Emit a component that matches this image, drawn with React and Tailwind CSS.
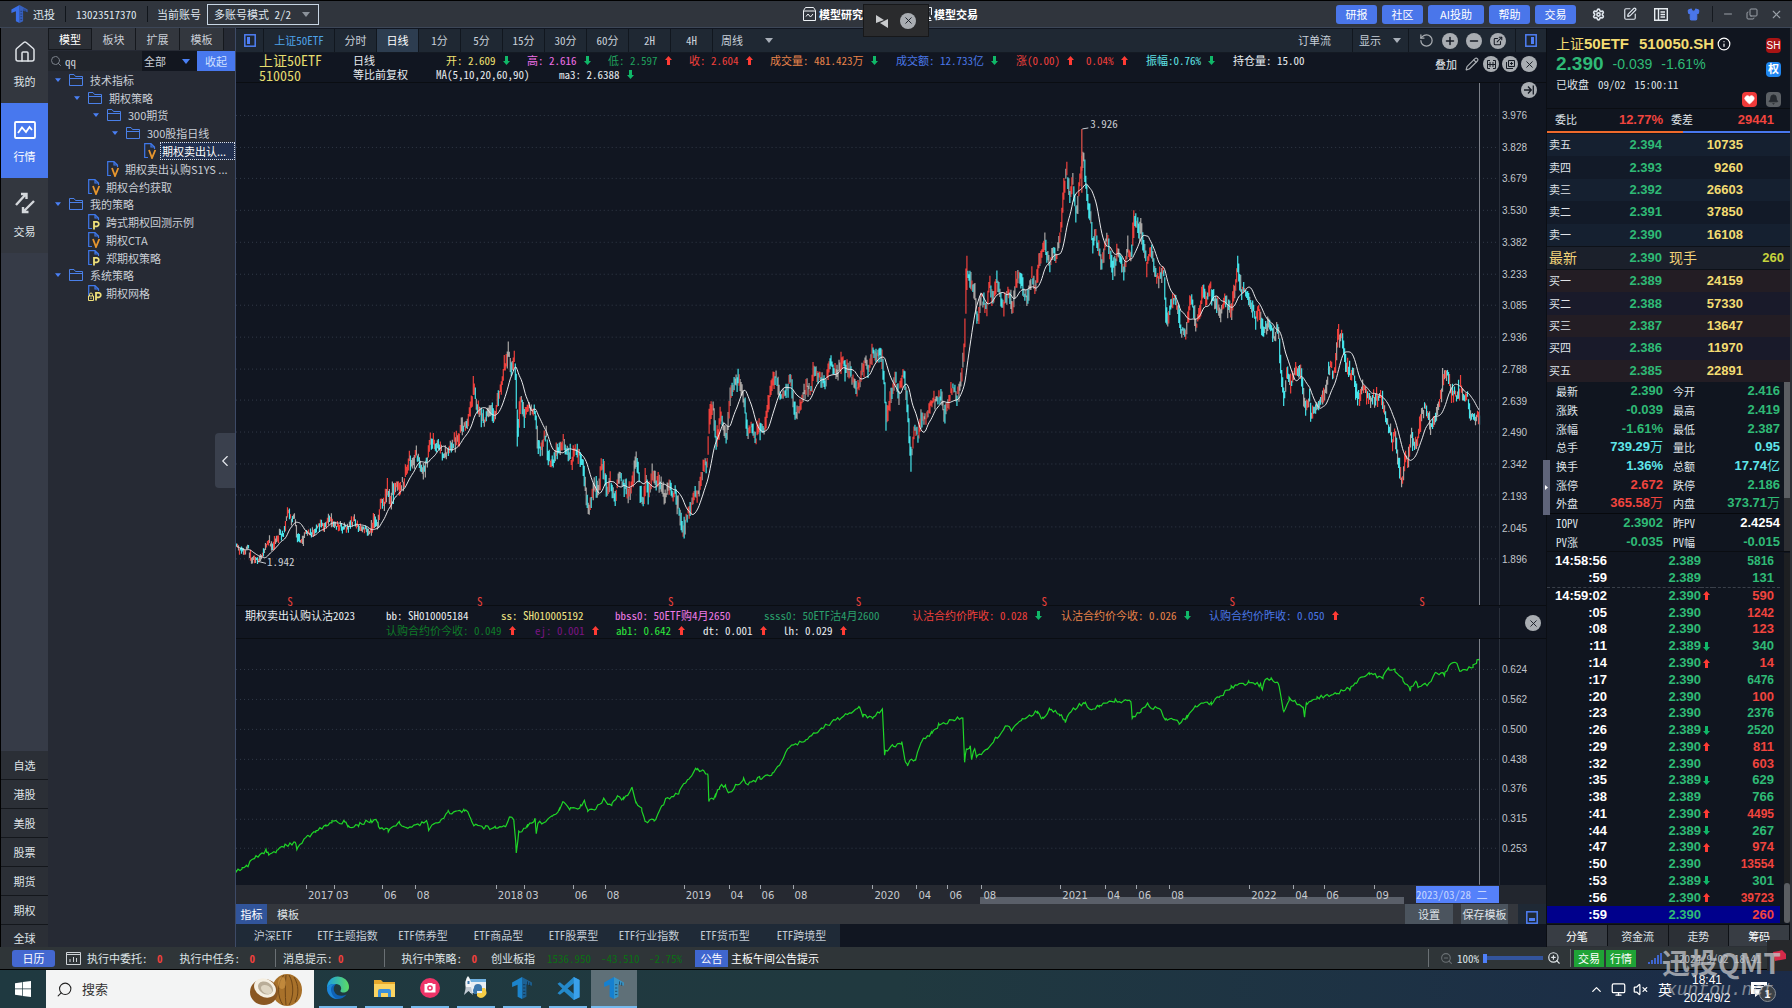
import React from "react";
import {
  Search, House, Settings, SquarePen, Shirt, Minus, Copy, X, RotateCcw, Plus, ExternalLink,
  Pencil, Info, Heart, Bell, ZoomIn, ZoomOut, ChevronUp, ChevronLeft, Monitor, VolumeX,
} from "lucide-react";

const UI = "[font-family:'Noto_Sans_CJK_SC',sans-serif]";
const MONO = "[font-family:'Noto_Sans_Mono_CJK_SC','Liberation_Mono','Noto_Sans_CJK_SC',monospace]";
const NUM = "[font-family:'Liberation_Sans','Noto_Sans_CJK_SC',sans-serif]";

/* ---------- chart data ---------- */

const CHART_LEFT = 236;
const CHART_RIGHT = 1481;
const CHART_W = 1264;
const PRICE_H = 523;
const SUB_H = 246;

function trace(ox, oy, sx, sy, text) {
  return text.trim().split(/\s+/).map((p) => {
    const [x, y] = p.split(",").map(Number);
    return [ox + x / sx, oy + y / sy];
  });
}

const pricePath = [
  ...trace(230, 330, 2.376, 3, `14,650 30,670 42,655 50,690 66,695 80,670 92,635 100,655 118,610 125,620 137,540 145,575 152,560
  160,625 170,635 180,610 195,615 210,585 222,590 237,565 250,590 265,595 280,590 293,572 308,600 320,600 331,612 342,580 350,590
  357,515 365,530 373,485 380,515 390,470 400,475 412,455 425,385 435,400 442,370 455,430 467,395 475,325 490,350 505,370 515,370
  525,345 540,330 550,290 560,295 570,245 579,170 585,230 598,265 610,265 620,240 626,265 640,190 652,110 662,65 668,125 676,75
  683,320 690,200 698,260 710,230 724,245 732,350 740,355 750,315 757,390 770,395 778,355 790,335 800,360 810,395 818,360 828,370
  838,410 845,480 851,550 860,500 866,460 874,490 882,410 890,430 895,500 903,450 913,510 925,440 938,470 947,505 957,450 964,385
  972,450 975,510 983,520 987,420 993,500 1003,435 1015,465 1025,470 1035,505 1043,460 1052,495 1058,475 1068,550 1074,585
  1079,595 1087,555 1095,535 1103,495 1112,490 1120,440 1126,400 1133,400 1139,270 1148,230 1155,340 1166,260 1172,290 1179,325
  1190,190 1198,170 1207,140 1216,190 1222,230 1230,310 1238,290 1248,335 1258,290 1266,310 1275,260 1285,170 1297,140 1308,200
  1320,185 1333,150 1342,260 1350,240 1360,205 1370,170 1380,190 1387,115 1400,140 1413,170 1425,95 1435,130 1445,130 1453,90
  1463,125 1475,130 1488,180 1498,150 1508,95 1516,120 1527,65 1535,80 1543,60 1550,90 1553,120`),
  ...trace(880, 100, 2.529, 3, `12,850 15,950 24,910 38,830 48,880 59,810 68,900 75,1020 79,1080 87,990 96,1010 104,950 115,960
  130,910 142,890 155,900 165,945 175,900 183,865 195,890 207,830 212,770 215,700 219,500 228,540 240,590 247,670 256,590 269,630
  278,550 286,600 295,540 310,620 325,570 335,630 343,550 352,530 362,570 373,600 385,530 392,565 402,500 415,430 422,470 430,500
  437,450 447,475 457,400 465,280 472,215 480,290 488,240 496,340 505,260 512,170 516,180 524,290 532,340 539,440 547,400 560,490
  575,410 590,510 603,450 618,520 628,450 637,480 642,350 652,380 664,400 674,490 686,450 700,540 718,510 725,670 730,640 745,590
  755,640 761,690 775,700 785,600 790,600 800,680 812,620 818,570 828,600 837,560 848,610 860,640 872,600 888,640 897,580 905,510
  915,570 928,575 943,620 952,660 958,620 971,700 985,670 998,710 1008,690 1016,830 1023,900 1030,820 1040,860 1052,810 1064,820
  1073,890 1078,940 1087,900 1091,950 1105,920 1115,920 1127,870 1140,800 1150,820 1160,700 1168,700 1178,780 1190,830 1200,820
  1209,900 1225,860 1240,890 1255,900 1266,880 1280,950 1290,990 1297,1030 1303,1000 1313,1100 1322,1150 1330,1070 1337,1080
  1345,1000 1352,1040 1360,1030 1370,940 1380,920 1390,950 1394,980 1408,960 1418,890 1427,830 1437,820 1446,870 1460,890
  1470,860 1478,890 1486,880 1495,950 1506,960 1518,950`),
];

const equityPath = [
  ...trace(230, 460, 2.45, 3, `14,1235 30,1225 40,1222 60,1195 90,1172 95,1183 115,1172 135,1157 160,1148 164,1165 190,1132
  210,1118 235,1098 250,1087 282,1087 290,1103 315,1095 345,1082 362,1083 364,1105 372,1103 388,1112 415,1090 428,1106 450,1100
  482,1085 487,1107 515,1085 535,1058 575,1052 590,1070 596,1098 625,1103 650,1105 675,1098 685,1075 696,1080 702,1175 708,1120
  730,1098 748,1078 751,1125 755,1092 790,1072 808,1050 816,1028 835,1048 860,1040 869,1022 877,1050 893,1050 915,1020 937,1035
  950,1008 965,1018 986,988 995,1030 1010,1050 1018,1085 1040,1082 1055,1050 1068,1020 1100,998 1125,955 1145,925 1158,935
  1172,945 1174,1022 1190,1010 1200,982 1215,975 1222,1000 1258,958 1270,970 1300,955 1330,940 1358,895 1370,862 1410,842
  1450,805 1490,778 1530,752 1542,745`),
  ...trace(860, 590, 2.272, 3, `0,355 8,378 30,380 52,358 57,490 75,468 96,460 103,505 109,530 115,512 127,512 140,455 165,430
  180,405 215,390 235,382 239,512 243,480 252,470 255,505 262,475 266,500 290,475 310,445 333,408 345,420 370,388 405,365 417,388
  433,358 455,372 467,395 480,365 512,335 525,358 545,350 580,332 617,335 620,385 640,365 655,345 685,362 697,388 715,385 727,402
  745,380 765,345 800,340 820,320 845,290 885,278 912,285 916,300 920,275 935,266 952,280 965,368 977,328 990,335 1008,350
  1012,378 1016,345 1040,325 1085,310 1115,295 1130,275 1160,252 1190,262 1203,237 1217,238 1235,270 1252,298 1265,272 1270,295
  1295,280 1310,250 1330,252 1340,230 1358,215 1365,243 1395,230 1403,215 1410,213`),
];

function sampler(points) {
  let i = 0;
  return (x) => {
    while (i < points.length - 2 && points[i + 1][0] < x) i++;
    const [x0, y0] = points[i];
    const [x1, y1] = points[i + 1];
    const t = Math.max(0, Math.min(1, (x - x0) / (x1 - x0 || 1)));
    return y0 + (y1 - y0) * t;
  };
}

function random(seed) {
  let s = seed;
  return () => {
    s = (s * 1664525 + 1013904223) % 4294967296;
    return s / 4294967296;
  };
}

function buildCandles() {
  const rnd = random(11);
  const at = sampler(pricePath);
  const d = { up: "", down: "", flat: "" };
  const mids = [];
  let prev = pricePath[0][1];
  for (let x = CHART_LEFT; x < CHART_RIGHT; x++) {
    const base = at(x);
    const calm = x < 370 ? 0.6 : 1;
    const mid = base + (rnd() - 0.5) * 7 * calm;
    const slope = base - prev;
    const hi = mid - (1.5 + rnd() * rnd() * 11 + Math.abs(slope) * 0.4) * calm;
    const lo = mid + (1.5 + rnd() * rnd() * 11 + Math.abs(slope) * 0.4) * calm;
    const r = rnd() + slope * 0.05;
    const kind = r > 0.68 ? "down" : r < 0.34 ? "up" : "flat";
    const seg = `M${x - CHART_LEFT + 0.5} ${(hi - 83).toFixed(1)}V${(lo - 83).toFixed(1)}`;
    d[kind] += seg;
    mids.push(base);
    prev = base;
  }
  let ma = "";
  mids.forEach((_, k) => {
    const from = Math.max(0, k - 15);
    let sum = 0;
    for (let j = from; j <= k; j++) sum += mids[j];
    ma += `${k ? "L" : "M"}${k + 0.5} ${(sum / (k - from + 1) - 83).toFixed(1)}`;
  });
  return { ...d, ma };
}

function buildEquity() {
  const rnd = random(5);
  const at = sampler(equityPath);
  let d = "";
  const keep = equityPath.map((p) => p[0]);
  const xs = [];
  for (let x = CHART_LEFT; x < CHART_RIGHT; x += 2) xs.push(x);
  [...xs, ...keep].sort((a, b) => a - b).forEach((x, k) => {
    const y = at(x) + (rnd() - 0.5) * 4;
    d += `${k ? "L" : "M"}${(x - CHART_LEFT).toFixed(1)} ${(y - 639).toFixed(1)}`;
  });
  return d;
}

const candles = buildCandles();
const equity = buildEquity();

const priceTicks = ["3.976", "3.828", "3.679", "3.530", "3.382", "3.233", "3.085", "2.936", "2.788", "2.639", "2.490", "2.342", "2.193", "2.045", "1.896"];
const subTicks = ["0.624", "0.562", "0.500", "0.438", "0.376", "0.315", "0.253"];
const sellMarks = [290, 480, 671, 859, 1045, 1233, 1423];
const timeTicks = [
  [306, "2017"], [334, "03"], [382, "06"], [415, "08"], [496, "2018"], [524, "03"], [573, "06"], [605, "08"], [684, "2019"],
  [729, "04"], [760, "06"], [793, "08"], [873, "2020"], [917, "04"], [948, "06"], [982, "08"], [1061, "2021"], [1106, "04"],
  [1137, "06"], [1170, "08"], [1250, "2022"], [1294, "04"], [1325, "06"], [1375, "09"],
];
const pct = (x) => `${((x - CHART_LEFT) / CHART_W) * 100}%`;

/* ---------- small drawings ---------- */

function Arrow({ dir }) {
  return (
    <svg width="7" height="9" viewBox="0 0 7 9" className={dir === "up" ? "shrink-0 text-[#ff3b34]" : "shrink-0 rotate-180 text-[#10b768]"}>
      <path d="M3.500 0L7 4H5V9H2V4H0Z" fill="currentColor" />
    </svg>
  );
}

function Caret({ className }) {
  return (
    <svg width="8" height="5" viewBox="0 0 8 5" className={className}>
      <path d="M0 0H8L4 5Z" fill="currentColor" />
    </svg>
  );
}

function BrandMark({ className, a, b }) {
  return (
    <svg viewBox="0 0 18 20" className={className}>
      <path d="M9 0L0 5V9L5 7V18L9 20Z" fill={a} />
      <path d="M9 0L18 5V8L13 6.500V18L9 20Z" fill={b} fillOpacity=".75" />
      <path d="M10 7H12M10 10H12M10 13H12M10 16H12M14 4V7M16 5V8" stroke="#10151f" strokeOpacity=".6" strokeWidth=".8" />
    </svg>
  );
}

function Folder() {
  return (
    <svg width="14" height="12" viewBox="0 0 14 12" fill="none" stroke="#4a80e8" className="shrink-0">
      <path d="M.5 11.500V.5H5L6.500 2.500H13.500V11.500ZM.5 4.500H13.500" />
    </svg>
  );
}

function Script({ kind }) {
  return (
    <svg width="14" height="16" viewBox="0 0 14 16" fill="none" className="shrink-0">
      <path d="M4 14.500H.7V.7H7L10.500 4V6M7 .7V4H10.500" stroke="#3f78ea" strokeWidth="1.200" />
      {kind === "V" && <path d="M5 7L8 15L11.300 7" stroke="#e8962e" strokeWidth="1.800" />}
      {kind === "P" && <path d="M6 15.500V7.800H9A2.300 2.300 0 0 1 9 12.300H6" stroke="#efe07a" strokeWidth="1.800" />}
      {kind === "L" && <path d="M8 15.500V7.800H11A2.300 2.300 0 0 1 11 12.300H8" stroke="#efe07a" strokeWidth="1.800" />}
      {kind === "L" && <path d="M.5 11H5.500V15.500H.5ZM1.500 11V9.500A1.500 1.500 0 0 1 4.500 9.500V11M3 12.500V14" fill="#262a34" stroke="#efe07a" />}
    </svg>
  );
}

function PanelGlyph({ side }) {
  return (
    <svg width="12" height="13" viewBox="0 0 12 13" fill="none" stroke="#4f7ff5" strokeWidth="1.500">
      <rect x=".8" y=".8" width="10.400" height="11.400" />
      {side === "left" && <rect x="3" y="3" width="3" height="7" fill="#4f7ff5" stroke="none" />}
      {side === "right" && <rect x="6" y="3" width="3" height="7" fill="#4f7ff5" stroke="none" />}
      {side === "bottom" && <rect x="3" y="7" width="6" height="3" fill="#4f7ff5" stroke="none" />}
    </svg>
  );
}

function RoundButton({ label, children }) {
  return (
    <button aria-label={label} className="flex size-4 items-center justify-center rounded-full bg-[#a9adb2] text-[#161b24]">
      {children}
    </button>
  );
}

const Divider = ({ className = "bg-[#10151b]" }) => <span className={`h-4 w-px ${className}`} />;

/* ---------- title bar ---------- */

function TitleBar() {
  return (
    <header className="relative flex h-7 shrink-0 items-center border-t border-b border-t-black border-b-[#3c4657] bg-[#30353d] text-[11px] text-[#dfe6ee]">
      <BrandMark className="ml-[11px] h-[18px] w-[17px]" a="#3a6fe8" b="#3a6fe8" />
      <span className="ml-[5px] w-8">迅投</span>
      <Divider />
      <span className={`w-[81px] pl-[10px] ${MONO}`}>13023517370</span>
      <Divider />
      <label htmlFor="account" className="pr-1.5 pl-[9px]">当前账号</label>
      <div className="relative">
        <select id="account" className={`h-[21px] w-28 appearance-none border border-[#c8d6e4] bg-transparent pl-1.5 text-[11px] leading-4 ${MONO}`}>
          <option>多账号模式 2/2</option>
        </select>
        <Caret className="pointer-events-none absolute top-2 right-[9px] text-[#8b929b]" />
      </div>

      <div className="absolute left-[803px] flex items-center font-bold text-white">
        <svg width="13" height="14" viewBox="0 0 13 14" fill="none" stroke="#eef2f6"><path d="M.5 3.500L2.500 .5H10.500L12.500 3.500V13.500H.5ZM.5 4H12.500M3 9.500L5 7L7.500 10L10 7" /></svg>
        <a href="#research" className="w-[103px] pl-[3px] whitespace-nowrap">模型研究</a>
        <svg width="13" height="14" viewBox="0 0 13 14" fill="none" stroke="#eef2f6"><path d="M.5 .5H12.500V8M.5 .5V13.500H12.500M9 9L12 11.500H8M3 7L5 4.500L7.500 7.500L10 4.500" /></svg>
        <a href="#trade" className="pl-0.5 whitespace-nowrap">模型交易</a>
      </div>
      <div className="absolute top-[3px] left-[863px] z-20 flex h-[33px] w-[66px] items-center justify-center gap-3 border border-[#17181a] bg-[#2a2b2d]">
        <svg width="12" height="14" viewBox="0 0 12 14" fill="#c9cbcd"><path d="M0 1L8 6L0 9ZM12 5V14L4 9Z" /></svg>
        <RoundButton label="关闭浮窗"><X size={11} strokeWidth={2} /></RoundButton>
      </div>

      <nav className="ml-auto flex items-center gap-[5px] text-white">
        <button className="h-[19px] w-[41px] rounded-[3px] bg-[#4a76ea]">研报</button>
        <button className="h-[19px] w-[41px] rounded-[3px] bg-[#4a76ea]">社区</button>
        <button className="h-[19px] w-14 rounded-[3px] bg-[#4a76ea]">AI投助</button>
        <button className="h-[19px] w-[41px] rounded-[3px] bg-[#4a76ea]">帮助</button>
        <button className="h-[19px] w-[41px] rounded-[3px] bg-[#4a76ea]">交易</button>
      </nav>
      <div className="flex items-center pr-[9px] pl-4">
        <button aria-label="设置" className="w-[31px]"><Settings size={13} strokeWidth={3} /></button>
        <button aria-label="编辑" className="w-[31px]"><SquarePen size={14} /></button>
        <button aria-label="布局" className="w-[33px]">
          <svg width="14" height="13" viewBox="0 0 14 13" fill="none" stroke="#e6ebf0" strokeWidth="1.400"><path d="M.7 .7H13.300V12.300H.7ZM4.500 .7V12.300M6.500 4H11M6.500 6.500H11M6.500 9H11" /></svg>
        </button>
        <button aria-label="皮肤" className="w-[25px]"><Shirt size={13} fill="#4a76ea" color="#4a76ea" /></button>
        <Divider className="bg-[#15191f]" />
        <button aria-label="最小化" className="ml-[9px] w-6"><Minus size={12} color="#9aa0a8" /></button>
        <button aria-label="还原" className="w-6"><Copy size={12} color="#9aa0a8" className="-scale-y-100" /></button>
        <button aria-label="关闭"><X size={13} color="#9aa0a8" /></button>
      </div>
    </header>
  );
}

/* ---------- left side ---------- */

function NavRail() {
  const markets = ["自选", "港股", "美股", "股票", "期货", "期权", "全球"];
  return (
    <nav className="flex w-12 shrink-0 flex-col border-l border-black bg-[#363b47] text-[11px] text-[#dfe3e8]">
      <button className="flex h-[75px] flex-col items-center justify-end gap-[9px] bg-[#33373f] pb-3.5">
        <House size={24} strokeWidth={1.500} />
        <span className="leading-4">我的</span>
      </button>
      <button className="flex h-[75px] flex-col items-center justify-end gap-[9px] bg-[#4878ee] pb-3.5 text-white">
        <svg width="22" height="18" viewBox="0 0 22 18" fill="none" stroke="white" strokeWidth="1.800"><rect x="1" y="1" width="20" height="16" rx="1" /><path d="M4 12L8 6.500L12 11L15.500 6L18 9" /></svg>
        <span className="leading-4">行情</span>
      </button>
      <button className="flex h-[75px] flex-col items-center justify-end gap-[9px] bg-[#33373f] pb-3.5">
        <svg width="20" height="22" viewBox="0 0 20 22" fill="none" stroke="#d4d7db" strokeWidth="2.400"><path d="M1 13L11 2M6 2H11.500V7M19 9L8 20M13.500 20H8V15" /></svg>
        <span className="leading-4">交易</span>
      </button>
      <div className="mt-auto flex flex-col bg-[#2b2f36]">
        {markets.map((m) => (
          <button key={m} className="h-[29px] border-b border-[#14171c] last:h-[22px] last:border-b-0 last:pt-1">{m}</button>
        ))}
      </div>
    </nav>
  );
}

const tree = [
  [0, "dir", "技术指标"], [1, "dir", "期权策略"], [2, "dir", "300期货"], [3, "dir", "300股指日线"], [4, "V", "期权卖出认...", true],
  [2, "V", "期权卖出认购S1YS ..."], [1, "V", "期权合约获取"], [0, "dir", "我的策略"], [1, "P", "跨式期权回测示例"], [1, "V", "期权CTA"],
  [1, "P", "郑期权策略"], [0, "dir", "系统策略"], [1, "L", "期权网格"],
];
const indents = ["pl-[7px]", "pl-[26px]", "pl-[45px]", "pl-16", "pl-[82px]"];

function ModelPanel() {
  return (
    <aside className="relative flex w-[188px] shrink-0 flex-col border-r border-[#3d4a66] bg-[#262a34] text-[11px] text-[#c9ced6]">
      <div className="flex h-[22px] shrink-0">
        {["模型", "板块", "扩展", "模板"].map((t, i) => (
          <button key={t} className={i === 0 ? "w-11 border border-[#15181d] bg-[#2b2f36] text-white" : "w-11 border-r border-[#15181d] bg-[#33373e]"}>{t}</button>
        ))}
      </div>
      <div className="mt-px flex h-5 shrink-0 items-stretch">
        <label className="flex w-[94px] items-center bg-[#21252c]">
          <Search size={12} className="mx-0.5 text-[#7b818a]" />
          <input aria-label="搜索模型" defaultValue="qq" className={`w-16 bg-transparent pl-px outline-none ${MONO}`} />
        </label>
        <div className="relative">
          <select aria-label="范围" className="h-5 w-[55px] appearance-none bg-[#12161f] pl-0.5"><option>全部</option></select>
          <Caret className="pointer-events-none absolute top-2 right-[7px] text-[#4a80f5]" />
        </div>
        <button className="flex-1 bg-[#4878ee] text-[#cfe0ff]">收起</button>
      </div>
      <ul className="flex h-[231px] shrink-0 flex-col">
        {tree.map(([level, kind, name, on]) => (
          <li key={name} className={`flex flex-1 items-center ${indents[level]}`}>
            {kind === "dir" ? (
              <button className="flex items-center leading-4 whitespace-nowrap">
                <Caret className="mr-2 h-1 w-1.5 text-[#4a80f5]" /><Folder /><span className="pl-[7px]">{name}</span>
              </button>
            ) : (
              <button className="flex flex-1 items-center leading-4 whitespace-nowrap">
                <span className="w-3.5" /><Script kind={kind} />
                <span className={on ? "ml-0.5 flex-1 border border-dotted border-[#d7dce4] bg-[#223050] px-px text-left text-white" : "pl-1"}>{name}</span>
              </button>
            )}
          </li>
        ))}
      </ul>
      <button aria-label="收起侧栏" className="absolute top-[405px] right-0 flex h-[55px] w-5 items-center justify-center rounded-l-sm bg-[#3a404d]">
        <ChevronLeft size={18} strokeWidth={1.500} color="#e6e9ee" />
      </button>
    </aside>
  );
}

/* ---------- centre ---------- */

function ChartToolbar() {
  const cell = "h-full w-[42px] border-r border-[#11171f]";
  return (
    <div className="mt-px flex h-6 shrink-0 items-center border-b border-[#141a23] bg-[#1f2833] text-[11px] text-[#c9d1da]">
      <button aria-label="左侧栏" className="flex h-full w-7 items-center justify-center border-r border-[#11171f]"><PanelGlyph side="left" /></button>
      <button className={`h-full w-[71px] border-r border-[#11171f] text-[#4ea3e8] ${MONO}`}>上证50ETF</button>
      <button className={cell}>分时</button>
      <button className="h-full w-[42px] border-r border-[#11171f] bg-[#2d3d50] text-white">日线</button>
      {["1分", "5分", "15分", "30分", "60分", "2H", "4H"].map((t) => <button key={t} className={`${cell} ${MONO}`}>{t}</button>)}
      <button className="flex h-full items-center pl-2">周线<Caret className="ml-[22px] text-[#a8afb8]" /></button>
      <button className="ml-auto h-full w-[76px] border-r border-[#11171f]">订单流</button>
      <button className="flex h-full w-14 items-center border-r border-[#11171f] pl-1.5">显示<Caret className="ml-3 text-[#a8afb8]" /></button>
      <div className="flex h-full w-[107px] items-center justify-center gap-2 border-r border-[#11171f]">
        <button aria-label="撤销"><RotateCcw size={15} color="#a9adb2" /></button>
        <RoundButton label="放大"><Plus size={12} strokeWidth={3} /></RoundButton>
        <RoundButton label="缩小"><Minus size={12} strokeWidth={3} /></RoundButton>
        <RoundButton label="弹出"><ExternalLink size={10} strokeWidth={2.500} /></RoundButton>
      </div>
      <button aria-label="右侧栏" className="flex w-[30px] justify-center"><PanelGlyph side="right" /></button>
    </div>
  );
}

const quotes = [
  ["开: 2.609", "down", "w-[81px] text-[#f0e070]"], ["高: 2.616", "down", "w-[81px] text-[#ee6fe6]"], ["低: 2.597", "up", "w-[81px] text-[#1f9f5c]"],
  ["收: 2.604", "up", "w-[81px] text-[#f0403c]"], ["成交量: 481.423万", "down", "w-[126px] text-[#e8834a]"], ["成交额: 12.733亿", "down", "w-[120px] text-[#4a78e8]"],
  ["涨(0.00)", "up", "w-[70px] text-[#f0403c]"], ["0.04%", "up", "w-[60px] text-[#f0403c]"], ["振幅:0.76%", "down", "w-[87px] text-[#5fe3e6]"], ["持仓量: 15.00", null, "w-20 text-[#e8ecf0]"],
];

function Value({ item }) {
  const [text, dir, style] = item;
  return <span className={`flex shrink-0 items-center gap-[7px] whitespace-nowrap ${style}`}>{text}{dir && <Arrow dir={dir} />}</span>;
}

function PriceHeader() {
  return (
    <div className={`flex h-[30px] shrink-0 border-b border-[#0a0d12] text-[11px] leading-[14px] text-[#e8ecf0] ${MONO}`}>
      <div className="w-[94px] pl-[23px] text-[14px] text-[#e5dc6e]">
        <div className="-mt-px leading-4">上证50ETF</div>
        <div className="leading-[14px]">510050</div>
      </div>
      <div className="w-[83px] pl-[23px] whitespace-nowrap"><div>日线</div><div>等比前复权</div></div>
      <div className="flex-1">
        <div className="flex pl-[33px]">{quotes.map((q) => <Value key={q[0]} item={q} />)}</div>
        <div className="flex pl-[23px]">
          <span className="w-[123px]">MA(5,10,20,60,90)</span>
          <Value item={["ma3: 2.6388", "down", ""]} />
        </div>
      </div>
      <div className="flex w-[111px] items-center gap-[3px] self-start pt-[3px]">
        <span className="w-[26px]">叠加</span>
        <button aria-label="画线" className="flex size-4 items-center justify-center"><Pencil size={14} color="#a9adb2" /></button>
        <RoundButton label="对比"><svg width="9" height="9" viewBox="0 0 9 9" fill="none" stroke="currentColor"><path d="M3 .5H.5V8.500H3M6 .5H8.500V8.500H6M.5 4.500H8.500M3 2V7M6 2V7" /></svg></RoundButton>
        <RoundButton label="新增"><svg width="9" height="9" viewBox="0 0 9 9" fill="none" stroke="currentColor"><path d="M2.500 .5H8.500V6.500H2.500ZM.5 2V8.500H7M5.500 2V5M4 3.500H7" /></svg></RoundButton>
        <RoundButton label="关闭"><X size={11} strokeWidth={2} /></RoundButton>
      </div>
    </div>
  );
}

function PriceChart() {
  return (
    <div className="flex min-h-0 flex-[523] border-b border-[#0a0d12]">
      <div className={`relative flex-1 text-[11px] leading-3 ${MONO}`}>
        <svg className="absolute inset-0 h-full w-full" viewBox={`0 0 ${CHART_W} ${PRICE_H}`} preserveAspectRatio="none" fill="none">
          {priceTicks.map((t, i) => (
            <path key={t} d={`M0 ${Math.round(32 + i * 31.7) + 0.5}H${CHART_W}`} stroke="#323a48" strokeDasharray="1 3" />
          ))}
          <g strokeWidth="1.200">
            <path d={candles.flat} stroke="#a9a6a4" />
            <path d={candles.up} stroke="#f0403c" />
            <path d={candles.down} stroke="#45e4ea" />
            <path d="M846.500 46V110" stroke="#e8544c" />
          </g>
          <path d={candles.ma} stroke="#e9eaec" strokeWidth="1" />
          <path d="M847 46L853 45M22 479L30 481" stroke="#c9ccd2" />
          <path d="M1244.500 0V523" stroke="#7c818a" />
        </svg>
        <span className="absolute top-[34px] text-[#c9ccd2]" style={{ left: pct(1091) }}>3.926</span>
        <span className="absolute top-[472px] text-[#c9ccd2]" style={{ left: pct(267) }}>1.942</span>
        {sellMarks.map((x) => (
          <span key={x} className="absolute -bottom-0.5 -translate-x-1/2 text-[#e8403a]" style={{ left: pct(x) }}>S</span>
        ))}
      </div>
      <div className={`relative flex w-[47px] flex-col justify-between border-l border-[#2a303b] pt-[27px] pb-10 pl-0.5 text-[10px] leading-[11px] text-[#c2c6cc] ${NUM}`}>
        {priceTicks.map((t) => <span key={t}>{t}</span>)}
        <div className="absolute -top-px right-[9px]">
          <RoundButton label="最新"><svg width="10" height="10" viewBox="0 0 10 10" fill="none" stroke="currentColor" strokeWidth="1.300"><path d="M0 5H7M4 1.500L7.300 5L4 8.500M9.300 .5V9.500" /></svg></RoundButton>
        </div>
      </div>
    </div>
  );
}

const subTop = [
  ["bb: SH010005184", null, "w-[115px] text-[#e8ecf0]"], ["ss: SH010005192", null, "w-[114px] text-[#f0e484]"], ["bbss0: 50ETF购4月2650", null, "w-[149px] text-[#ee7ae6]"],
  ["ssss0: 50ETF沽4月2600", null, "w-[148px] text-[#2aa06c]"], ["认沽合约价昨收: 0.028", "down", "w-[149px] text-[#f0403c]"],
  ["认沽合约价今收: 0.026", "down", "w-[148px] text-[#e8834a]"], ["认购合约价昨收: 0.050", "up", "w-[148px] text-[#4a78e8]"],
];
const subBottom = [
  ["认购合约价今收: 0.049", "up", "w-[149px] text-[#0f7a28]"], ["ej: 0.001", "up", "w-[81px] text-[#7a1482]"], ["ab1: 0.642", "up", "w-[87px] text-[#2ee83c]"],
  ["dt: 0.001", "up", "w-20 text-[#e8ecf0]"], ["lh: 0.029", "up", "w-20 text-[#e8ecf0]"],
];

function SubChart() {
  return (
    <>
      <div className={`flex h-[33px] shrink-0 border-b border-[#0a0d12] pt-0.5 text-[11px] leading-[15px] ${MONO}`}>
        <span className="w-[150px] pl-[9px] whitespace-nowrap text-[#e8ecf0]">期权卖出认购认沽2023</span>
        <div className="flex-1">
          <div className="flex">{subTop.map((q) => <Value key={q[0]} item={q} />)}</div>
          <div className="flex">{subBottom.map((q) => <Value key={q[0]} item={q} />)}</div>
        </div>
        <div className="flex w-[47px] items-center justify-center border-l border-[#2a303b] pl-5"><RoundButton label="关闭副图"><X size={11} strokeWidth={2} /></RoundButton></div>
      </div>
      <div className="flex min-h-0 flex-[246]">
        <div className="relative flex-1">
          <svg className="absolute inset-0 h-full w-full" viewBox={`0 0 ${CHART_W} ${SUB_H}`} preserveAspectRatio="none" fill="none">
            {subTicks.map((t, i) => (
              <path key={t} d={`M0 ${Math.round(30 + i * 29.9) + 0.5}H${CHART_W}`} stroke="#323a48" strokeDasharray="1 3" />
            ))}
            <path d={equity} stroke="#1fd528" strokeWidth="1.200" />
            <path d="M1244.500 0V246" stroke="#7c818a" />
          </svg>
        </div>
        <div className={`flex w-[47px] flex-col justify-between border-l border-[#2a303b] pt-[25px] pb-[31px] pl-0.5 text-[10px] leading-[11px] text-[#c2c6cc] ${NUM}`}>
          {subTicks.map((t) => <span key={t}>{t}</span>)}
        </div>
      </div>
    </>
  );
}

function TimeAxis() {
  return (
    <div className="flex h-[19px] shrink-0 bg-[#262931]">
      <div className="relative flex-1 text-[10px] leading-[12px] text-[#c6cad0] [font-family:'DejaVu_Sans',sans-serif]">
        <span className="absolute bottom-0 h-[7px] bg-[#5a5f69]" style={{ left: pct(981), width: `${(424 / CHART_W) * 100}%` }} />
        {timeTicks.map(([x, t]) => (
          <span key={x} className="absolute top-0 h-1 border-l border-[#a0a5ad]" style={{ left: pct(x) }}>
            <span className="absolute top-[5px] left-px">{t}</span>
          </span>
        ))}
        <span className={`absolute top-px right-0 h-[17px] w-[83px] bg-[#5581fa] text-[11px] leading-4 whitespace-nowrap text-[#c5d6ff] ${MONO}`}>2023/03/28 二</span>
      </div>
      <div className="w-[47px] bg-[#22262e]" />
    </div>
  );
}

function BottomTabs() {
  const etfs = [
    ["沪深ETF", "w-[74px]"], ["ETF主题指数", "w-[75px]"], ["ETF债券型", "w-[76px]"], ["ETF商品型", "w-[75px]"],
    ["ETF股票型", "w-[75px]"], ["ETF行业指数", "w-[76px]"], ["ETF货币型", "w-[76px]"], ["ETF跨境型", "w-[77px]"],
  ];
  return (
    <>
      <div className="flex h-5 shrink-0 items-stretch bg-[#34373d] text-[11px] leading-4 text-[#dfe3e8]">
        <button className="w-[31px] bg-[#31549a] text-white">指标</button>
        <button className="w-[42px]">模板</button>
        <button className="ml-auto w-12 bg-[#4b545e]">设置</button>
        <button className="ml-2 w-[47px] bg-[#4b545e] whitespace-nowrap">保存模板</button>
        <button aria-label="底部栏" className="ml-2.5 flex w-7 items-end justify-center bg-[#1f2935]"><PanelGlyph side="bottom" /></button>
      </div>
      <div className={`flex h-[23px] shrink-0 text-[11px] text-[#c4ccd6] ${MONO}`}>
        {etfs.map(([t, w]) => <button key={t} className={`${w} bg-[#1f2a37] whitespace-nowrap`}>{t}</button>)}
      </div>
    </>
  );
}

/* ---------- right side ---------- */

const G = "text-[#2fba76]";
const R = "text-[#f0443e]";
const C = "text-[#5fe6ea]";
const W = "text-white";

const sells = [["卖五", "2.394", "10735"], ["卖四", "2.393", "9260"], ["卖三", "2.392", "26603"], ["卖二", "2.391", "37850"], ["卖一", "2.390", "16108"]];
const buys = [["买一", "2.389", "24159"], ["买二", "2.388", "57330"], ["买三", "2.387", "13647"], ["买四", "2.386", "11970"], ["买五", "2.385", "22891"]];
const details = [
  ["最新", "2.390", G, "今开", "2.416", G], ["涨跌", "-0.039", G, "最高", "2.419", G], ["涨幅", "-1.61%", G, "最低", "2.387", G],
  ["总手", "739.29万", C, "量比", "0.95", C], ["换手", "1.36%", C, "总额", "17.74亿", C], ["涨停", "2.672", R, "跌停", "2.186", G],
  ["外盘", "365.58万", R, "内盘", "373.71万", G], ["IOPV", "2.3902", G, "昨PV", "2.4254", W], ["PV涨", "-0.035", G, "PV幅", "-0.015", G],
];
const ticks = [
  ["14:58:56", "2.389", "", "5816", G], [":59", "2.389", "", "131", G], ["14:59:02", "2.390", "up", "590", R], [":05", "2.390", "", "1242", R],
  [":08", "2.390", "", "123", R], [":11", "2.389", "down", "340", G], [":14", "2.390", "up", "14", R], [":17", "2.390", "", "6476", G],
  [":20", "2.390", "", "100", R], [":23", "2.390", "", "2376", G], [":26", "2.389", "down", "2520", G], [":29", "2.390", "up", "811", R],
  [":32", "2.390", "", "603", R], [":35", "2.389", "down", "629", G], [":38", "2.389", "", "766", G], [":41", "2.390", "up", "4495", R],
  [":44", "2.389", "down", "267", G], [":47", "2.390", "up", "974", R], [":50", "2.390", "", "13554", R], [":53", "2.389", "down", "301", G],
  [":56", "2.390", "up", "39723", R], [":59", "2.390", "", "260", R],
];

function Depth({ rows, bands }) {
  return (
    <table className="h-28 w-full shrink-0 table-fixed border-collapse text-[13px] leading-4">
      <colgroup><col className="w-9" /><col className="w-[79px]" /><col className="w-[81px]" /><col /></colgroup>
      <tbody>
        {rows.map(([name, price, size], i) => (
          <tr key={name} className={bands[i % 2]}>
            <th className="pl-0.5 text-left text-[11px] font-normal whitespace-nowrap text-[#dfe3e8]">{name}</th>
            <td className={`text-right font-bold ${G}`}>{price}</td>
            <td className="text-right font-bold text-[#f3dc72]">{size}</td>
            <td />
          </tr>
        ))}
      </tbody>
    </table>
  );
}

function QuotePanel() {
  return (
    <aside className={`relative flex w-[246px] shrink-0 flex-col border-r-2 border-l border-r-[#2c3038] border-l-[#0b0e14] bg-[#10151f] ${NUM}`}>
      <button aria-label="收起右栏" className="absolute top-[432px] -left-1 z-10 flex h-[55px] w-[7px] items-center justify-center bg-[#5f647a]">
        <svg width="3" height="5" viewBox="0 0 3 5"><path d="M0 0L3 2.500L0 5Z" fill="white" /></svg>
      </button>
      <div className="flex h-[81px] shrink-0 justify-between border-b border-[#0a0d12] pr-[9px] pl-[9px]">
        <div className="whitespace-nowrap">
          <h1 className="flex items-center pt-1.5 text-[15px] leading-5 font-bold text-[#f3dc72]">
            <span className="text-[14px] font-normal">上证</span>50ETF<span className="pl-2.5">510050.SH</span><Info size={14} className="ml-[3px] text-white" />
          </h1>
          <p className={`flex items-center gap-[9px] text-[14px] leading-5 ${G}`}><b className="text-[19px]">2.390</b><span>-0.039</span><span>-1.61%</span></p>
          <p className={`flex gap-[9px] pt-0.5 text-[11px] leading-4 text-[#dfe3e8] ${MONO}`}><span>已收盘</span><span>09/02</span><span>15:00:11</span></p>
        </div>
        <div className="flex flex-col items-end pt-2.5">
          <span className="flex size-[15px] items-center justify-center rounded-sm bg-[#a81414] text-[10px] text-white">SH</span>
          <span className="mt-[9px] flex size-[15px] items-center justify-center rounded-sm bg-[#1f86f0] text-[11px] font-bold text-white">权</span>
          <div className="mt-[15px] flex gap-[9px]">
            <button aria-label="收藏" className="flex size-[15px] items-center justify-center rounded-sm bg-[#f03a3a]"><Heart size={11} fill="white" color="white" /></button>
            <button aria-label="提醒" className="flex size-[15px] items-center justify-center rounded-sm bg-[#5c6065]"><Bell size={11} fill="#24282e" color="#24282e" /></button>
          </div>
        </div>
      </div>
      <div className="flex h-[22px] shrink-0 items-center text-[13px] font-bold">
        <span className="w-9 pl-2 text-[11px] font-normal whitespace-nowrap text-[#dfe3e8]">委比</span>
        <span className={`w-20 text-right ${R}`}>12.77%</span>
        <span className="w-9 pl-2 text-[11px] font-normal whitespace-nowrap text-[#dfe3e8]">委差</span>
        <span className={`w-[75px] text-right ${R}`}>29441</span>
      </div>
      <div className="flex h-0.5 shrink-0"><span className="w-[56%] bg-[#ef6a2c]" /><span className="flex-1 bg-[#4878ee]" /></div>
      <div className="h-px shrink-0" />
      <Depth rows={sells} bands={["bg-[#152030]", "bg-[#121a28]"]} />
      <div className="flex h-6 shrink-0 items-center border-y border-[#0d1118] bg-[#1b202b] text-[13px] font-bold">
        <span className="w-9 pl-0.5 text-[14px] leading-5 font-normal whitespace-nowrap text-[#f3d37a]">最新</span>
        <span className={`w-[79px] text-right ${G}`}>2.390</span>
        <span className="w-9 pl-[7px] text-[14px] leading-5 font-normal whitespace-nowrap text-[#f3d37a]">现手</span>
        <span className="flex-1 pr-1.5 text-right text-[#c6d23c]">260</span>
      </div>
      <Depth rows={buys} bands={["bg-[#231d24]", "bg-[#191a2a]"]} />

      <div className="flex h-[170px] shrink-0 border-b border-[#0a0d12] bg-[#10151f]">
        <table className="h-[169px] flex-1 table-fixed border-collapse text-[13px] leading-4">
          <colgroup><col className="w-[43px]" /><col className="w-[73px]" /><col className="w-[52px]" /><col /></colgroup>
          <tbody>
            {details.map(([a, b, bc, c, d, dc], i) => (
              <tr key={a} className={i === 7 ? "border-t border-[#07090d]" : ""}>
                <th className={`pl-[9px] text-left text-[11px] font-normal whitespace-nowrap text-[#dfe3e8] ${MONO}`}>{a}</th>
                <td className={`text-right font-bold whitespace-nowrap ${bc}`}>{b.replace(/[万亿]/, "")}<span className="font-normal">{b.match(/[万亿]/)}</span></td>
                <th className={`pl-2.5 text-left text-[11px] font-normal whitespace-nowrap text-[#dfe3e8] ${MONO}`}>{c}</th>
                <td className={`text-right font-bold whitespace-nowrap ${dc}`}>{d.replace(/[万亿]/, "")}<span className="font-normal">{d.match(/[万亿]/)}</span></td>
              </tr>
            ))}
          </tbody>
        </table>
        <div className="ml-1 w-1.5 bg-[#2c2e32]"><div className="h-[116px] bg-[#5b5e63]" /></div>
      </div>

      <div className="flex min-h-0 flex-1 pt-px pb-px">
        <table className="h-full flex-1 table-fixed border-collapse text-[13px] leading-4 font-bold">
          <colgroup><col className="w-[60px]" /><col className="w-[94px]" /><col className="w-3" /><col /></colgroup>
          <tbody>
            {ticks.map(([time, price, dir, vol, color], i) => (
              <tr key={i} className={i === 21 ? "bg-[#00008c]" : i === 1 ? "border-b border-dashed border-[#3a404a]" : ""}>
                <td className="text-right whitespace-nowrap text-white">{time}</td>
                <td className={`text-right ${G}`}>{price}</td>
                <td className="pl-0.5">{dir && <Arrow dir={dir} />}</td>
                <td className={`pr-1.5 text-right ${color} ${vol.length > 3 ? "text-[12px]" : ""}`}>{vol}</td>
              </tr>
            ))}
          </tbody>
        </table>
        <div className="ml-1 flex w-1.5 flex-col justify-end bg-[#1d1f22]"><div className="h-10 rounded-sm bg-[#5b5e63]" /></div>
      </div>
      <div className={`flex h-[23px] shrink-0 border-t border-[#0a0d12] bg-[#2c3036] pb-px text-[11px] text-[#dfe3e8] ${UI}`}>
        {["分笔", "资金流", "走势", "筹码"].map((t, i) => (
          <button key={t} className={`flex-1 border-r border-[#0e1116] leading-4 ${i === 0 || i === 3 ? "bg-[#383d44] text-white" : "bg-[#2c3036]"}`}>{t}</button>
        ))}
      </div>
    </aside>
  );
}

/* ---------- bottom ---------- */

function StatusBar() {
  const bar = <span className="h-[18px] w-px bg-[#6a7074]" />;
  const zero = <b className="text-[#f0403c]">0</b>;
  return (
    <footer className={`flex h-[23px] shrink-0 items-center border-b border-black bg-[#2f3538] text-[11px] leading-4 whitespace-nowrap text-[#dfe5e8] ${MONO}`}>
      <button className="ml-3 h-[17px] w-[43px] rounded-[3px] bg-[#4468d0] text-white">日历</button>
      <svg width="15" height="13" viewBox="0 0 15 13" fill="none" stroke="#cfd4d8" className="mr-1.5 ml-[11px]"><path d="M.5 .5H14.500V12.500H.5ZM.5 2.500H14.500M4 10V7M7.500 10V5M10.500 10V6" /></svg>
      <span className="w-[70px]">执行中委托:</span>{zero}
      <span className="w-[87px] pl-[17px]">执行中任务:</span>{zero}
      <span className="w-5" />{bar}
      <span className="w-[62px] pl-[7px]">消息提示:</span>{zero}
      <span className="w-10" />{bar}
      <span className="w-[87px] pl-[17px]">执行中策略:</span>{zero}
      <span className="w-[70px] pl-[14px]">创业板指</span>
      <span className="w-[54px] text-[#0b6f14]">1536.950</span>
      <span className="w-12 text-[#0b6f14]">-43.510</span>
      <span className="w-[46px] text-[#0b6f14]">-2.75%</span>
      <span className="h-[17px] w-[33px] bg-[#3f66cf] text-center text-white">公告</span>
      <a href="#notice" className="pl-[3px] text-white">主板午间公告提示</a>
      <div className="ml-auto flex w-[364px] items-center">
        {bar}
        <ZoomOut size={13} className="mr-1 ml-[11px] text-[#6a7074]" />
        <label htmlFor="zoom" className="w-[26px]">100%</label>
        <input id="zoom" type="range" min="0" max="100" defaultValue="0" className="h-1 w-[60px] appearance-none bg-[#33549c] [&::-webkit-slider-thumb]:h-[9px] [&::-webkit-slider-thumb]:w-1 [&::-webkit-slider-thumb]:appearance-none [&::-webkit-slider-thumb]:bg-[#4f80fa]" />
        <ZoomIn size={14} className="mr-[9px] ml-1" />
        {bar}
        <button className="ml-[3px] h-[17px] w-[30px] bg-[#1fa336] text-white">交易</button>
        <button className="ml-0.5 h-[17px] w-[30px] bg-[#1fa336] text-white">行情</button>
        <svg width="15" height="11" viewBox="0 0 15 11" fill="#3f66cf" className="ml-3"><path d="M0 9H2V11H0ZM3 7H5V11H3ZM6 5H8V11H6ZM9 2H11V11H9ZM12 0H14V11H12Z" /></svg>
        <span className="pl-4 text-[#b9bfc4]">2024/9/02 18:41</span>
      </div>
    </footer>
  );
}

function EdgeLogo() {
  return (
    <svg width="24" height="24" viewBox="0 0 24 24">
      <defs>
        <linearGradient id="edgeTop" x1="0" y1="0" x2="1" y2="0"><stop offset="0" stopColor="#1b9de2" /><stop offset="1" stopColor="#5ddb63" /></linearGradient>
      </defs>
      <path d="M1 12A11 11 0 0 1 23 11C23 15 20 16.500 17.500 16.500C14.500 16.500 14 15 14.800 14C16 12 14.500 8 10 8C5.500 8 2 10 1 13Z" fill="url(#edgeTop)" />
      <path d="M1 12C2 8.500 6 7.500 10 8C7.500 10 7 13.500 8.500 16C10.500 20 16 21 20.500 18.500C18 22 14 23.300 11 23C5 22.500 1 18 1 12Z" fill="#0f62b5" />
      <path d="M10 8C6 8.500 4 12 5.500 16.500C6.500 20 9 22.500 12 23C6 23 1 18.500 1 12C2 9 6 7.500 10 8Z" fill="#1d86d8" />
    </svg>
  );
}

function Coconuts() {
  return (
    <svg width="52" height="33" viewBox="0 0 52 33">
      <ellipse cx="37" cy="17" rx="15" ry="16" fill="#a8712a" />
      <path d="M34 2C27 9 27 24 33 32M39 2C44 10 44 24 39 32M36 2C35 12 35 22 36 32M44 4C49 12 49 22 45 29" stroke="#6e4516" fill="none" />
      <ellipse cx="32" cy="10" rx="4" ry="6" fill="#d29a4a" fillOpacity=".6" />
      <ellipse cx="14" cy="19" rx="14" ry="13" fill="#8a5722" />
      <ellipse cx="15" cy="15" rx="11.500" ry="9" transform="rotate(30 15 15)" fill="#f5efe2" />
      <ellipse cx="15.500" cy="15" rx="8" ry="6" transform="rotate(30 15.500 15)" fill="#b9ad98" />
      <ellipse cx="16.500" cy="16.500" rx="6" ry="4" transform="rotate(30 16.500 16.500)" fill="#ded5c2" />
    </svg>
  );
}

function TaskButton({ label, active, children }) {
  return (
    <button aria-label={label} className={`flex h-full w-[46px] flex-col items-center ${active ? "bg-[#5f7078]" : ""}`}>
      <span className="flex flex-1 items-center">{children}</span>
      <span className={`h-0.5 bg-[#76b9ed] ${active ? "w-full" : "w-[38px]"}`} />
    </button>
  );
}

function Taskbar() {
  return (
    <footer className={`flex h-[38px] shrink-0 items-center bg-linear-to-r from-[#1f3940] via-[#20393f] to-[#1b2b48] ${UI}`}>
      <button aria-label="开始" className="flex h-full w-[46px] items-center justify-center">
        <svg width="16" height="16" viewBox="0 0 16 16" fill="white"><path d="M0 2.200L7 1.200V7.600H0ZM7.700 1.100L16 0V7.600H7.700ZM0 8.300H7V14.800L0 13.800ZM7.700 8.300H16V16L7.700 14.900Z" /></svg>
      </button>
      <label className="flex h-full w-[268px] items-center bg-[#f3f4f4] pr-3 pl-2.5 text-[13px] text-[#333]">
        <Search size={17} strokeWidth={1.500} className="mr-[9px] -scale-x-100 text-[#222]" />
        <input aria-label="搜索" placeholder="搜索" className="w-0 flex-1 bg-transparent outline-none placeholder:text-[#333]" />
        <Coconuts />
      </label>
      <div className="ml-px flex h-full">
        <TaskButton label="Edge"><EdgeLogo /></TaskButton>
        <TaskButton label="文件夹">
          <svg width="21" height="19" viewBox="0 0 21 19"><path d="M0 1H7L9 3H21V18H0Z" fill="#e8a92c" /><path d="M0 5H21V18H0Z" fill="#fbd462" /><path d="M4 18V12Q4 10 6 10H15Q17 10 17 12V18H14V14H7V18Z" fill="#3a8fdc" /></svg>
        </TaskButton>
        <TaskButton label="录屏">
          <svg width="20" height="20" viewBox="0 0 20 20"><circle cx="10" cy="10" r="10" fill="#ee3468" /><path d="M4.500 6H7L8 5H12L13 6H15.500V14.500H4.500Z" fill="white" /><circle cx="10" cy="10" r="2.800" fill="#ee3468" /><circle cx="10" cy="10" r="1.300" fill="white" /></svg>
        </TaskButton>
        <TaskButton label="Python">
          <svg width="24" height="24" viewBox="0 0 24 24"><path d="M6 3H22V17H6Z" fill="#e8eef4" /><path d="M6 3H22V6H6Z" fill="#6fb0e0" /><path d="M4 0Q8 4 7 14H2Q0 4 4 0Z" fill="#f3f5f7" /><path d="M0 19L2 11H7L9 19L4.500 15Z" fill="#c2cbd4" /><path d="M3.500 5H5.500V8H3.500Z" fill="#3a76ac" /><path d="M10 12Q10 8 14 8Q18 8 18 12V15H13V18H10Q8 14 10 12Z" fill="#3a76ac" /><path d="M18 12H21Q24 17 21 20Q17 24 13 20V17H18Z" fill="#f7ce46" /></svg>
        </TaskButton>
        <TaskButton label="QMT"><BrandMark className="h-[22px] w-5" a="#1c84cc" b="#1c6fb0" /></TaskButton>
        <TaskButton label="VS Code">
          <svg width="23" height="23" viewBox="0 0 23 24"><path fillRule="evenodd" d="M17 0L23 3V21L17 24L7 15L2.500 18.500L0 17L5 12L0 7L2.500 5.500L7 9ZM17 6.500L10.500 12L17 17.500Z" fill="#2489ca" /><path d="M17 0L23 3V21L17 24Z" fill="#3aa0ea" /></svg>
        </TaskButton>
        <TaskButton label="QMT 交易端" active><BrandMark className="h-[22px] w-5" a="#1580d0" b="#2ba0e0" /></TaskButton>
      </div>
      <div className="ml-auto flex h-full items-center text-white">
        <button aria-label="更多" className="w-[22px]"><ChevronUp size={15} /></button>
        <button aria-label="网络" className="w-[22px]"><Monitor size={15} /></button>
        <button aria-label="音量" className="w-[22px]"><VolumeX size={15} /></button>
        <button className="w-5 text-[14px]">英</button>
        <time className={`flex w-16 flex-col items-center text-[12px] leading-[18px] ${NUM}`}><span>18:41</span><span>2024/9/2</span></time>
        <button aria-label="通知" className="relative ml-3 w-[41px]">
          <svg width="16" height="16" viewBox="0 0 16 16" fill="white"><path d="M0 1H16V13H8L4 16V13H0ZM3 4V5H13V4ZM3 7V8H13V7Z" fillRule="evenodd" /></svg>
          <span className="absolute top-1 left-2 flex size-[17px] items-center justify-center rounded-full border border-[#8a8f96] bg-[#3c4248] text-[11px] font-bold">1</span>
        </button>
      </div>
    </footer>
  );
}

function Watermark() {
  return (
    <div className="pointer-events-none absolute right-0 bottom-0 z-30 h-[68px] w-[130px] text-[#c4c6ca]">
      <div className="absolute top-0 right-0 flex h-[31px] w-[25px] items-center justify-center bg-[#26282b]">
        <svg width="13" height="11" viewBox="0 0 13 11" fill="#d62a4a"><path d="M0 2L6 1L9 0L13 4V9L2 11Z" /></svg>
      </div>
      <p className={`absolute top-1 left-0 text-[28px] leading-9 font-bold whitespace-nowrap opacity-75 ${UI}`}>迅投QMT</p>
      <p className="absolute top-10 left-1 text-[18px] leading-5 italic opacity-60 [font-family:'Liberation_Mono',monospace]">xuntou.net</p>
    </div>
  );
}

export default function App() {
  return (
    <div className={`relative flex h-screen w-full flex-col overflow-hidden bg-[#10151f] ${UI}`}>
      <TitleBar />
      <div className="flex min-h-0 flex-1">
        <NavRail />
        <ModelPanel />
        <main className="flex min-w-0 flex-1 flex-col bg-[#111621]">
          <ChartToolbar />
          <PriceHeader />
          <PriceChart />
          <SubChart />
          <TimeAxis />
          <BottomTabs />
        </main>
        <QuotePanel />
      </div>
      <StatusBar />
      <Taskbar />
      <Watermark />
    </div>
  );
}
